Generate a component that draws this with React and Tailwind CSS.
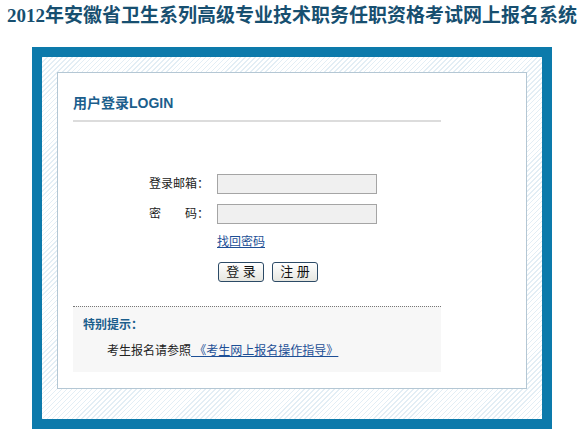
import React from "react";

export default function App() {
  return (
    <div className="w-[587px] h-[435px] bg-white overflow-hidden font-['Liberation_Sans','Noto_Sans_CJK_SC',sans-serif]">
      <h1 className="h-[47px] pl-[7px] pt-[4px] text-[19px] leading-[24px] font-bold text-[#174f70] whitespace-nowrap font-['Liberation_Serif','Noto_Sans_CJK_SC',serif]">
        2012年安徽省卫生系列高级专业技术职务任职资格考试网上报名系统
      </h1>
      <div className="ml-[32px] w-[520px] h-[382px] border-[10px] border-[#0c7aab] pt-[15px] px-[15px] bg-[repeating-linear-gradient(135deg,#e3eef5_0px,#e3eef5_1px,#ffffff_1px,#ffffff_3.5px)]">
        <div className="h-[317px] border border-[#b4c7d4] bg-white pl-[15px] pt-[21px]">
          <div className="w-[368px]">
            <h2 className="h-[18px] text-[14px] leading-[18px] font-bold text-[#1b5e8c]">
              用户登录LOGIN
            </h2>
            <div className="mt-[8px] h-[2px] bg-[#dcdcdc]"></div>

            <div className="mt-[52px] flex items-center h-[20px]">
              <div className="w-[136px] text-right text-[12px] leading-[16px] text-[#222]">
                登录邮箱：
              </div>
              <div className="ml-[8px] w-[160px] h-[20px] border border-[#a5a5a5] bg-[#f0f0f0]"></div>
            </div>
            <div className="mt-[10px] flex items-center h-[20px]">
              <div className="w-[136px] flex justify-end text-[12px] leading-[16px] text-[#222]">
                <span className="inline-flex w-[60px] justify-between">
                  <span>密</span>
                  <span>码：</span>
                </span>
              </div>
              <div className="ml-[8px] w-[160px] h-[20px] border border-[#a5a5a5] bg-[#f0f0f0]"></div>
            </div>
            <div className="mt-[10px] h-[16px] pl-[144px] text-[12px] leading-[16px]">
              <a className="text-[#1d4f96] underline">找回密码</a>
            </div>
            <div className="mt-[12px] pl-[145px] flex gap-[8px]">
              <button className="w-[46px] h-[20px] border border-[#2c4a66] rounded-[3px] bg-gradient-to-b from-white to-[#e6e6e0] text-[13px] leading-[16px] text-[#111]">
                登 录
              </button>
              <button className="w-[46px] h-[20px] border border-[#2c4a66] rounded-[3px] bg-gradient-to-b from-white to-[#e6e6e0] text-[13px] leading-[16px] text-[#111]">
                注 册
              </button>
            </div>

            <div className="mt-[24px] h-[66px] border-t border-dotted border-[#777] bg-[#f7f7f7] pl-[10px] pt-[10px]">
              <div className="h-[16px] text-[12px] leading-[16px] font-bold text-[#1b5e8c]">
                特别提示：
              </div>
              <div className="mt-[10px] ml-[24px] h-[16px] text-[12px] leading-[16px] text-[#222] whitespace-nowrap">
                考生报名请参照
                <a className="text-[#1d4f96] underline">&nbsp;《考生网上报名操作指导》</a>
              </div>
            </div>
          </div>
        </div>
      </div>
    </div>
  );
}
